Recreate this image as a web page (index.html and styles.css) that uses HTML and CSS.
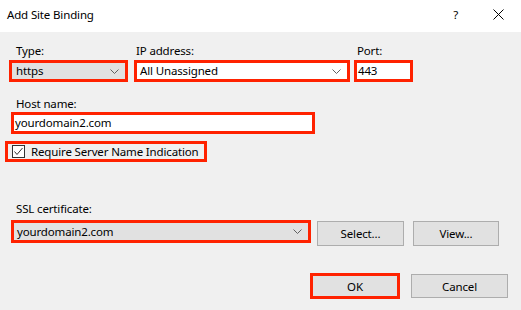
FILE: index.html
```html
<!DOCTYPE html>
<html lang="en">
<head>
    <meta charset="UTF-8">
    <title>Add Site Binding</title>
    <link rel="stylesheet" href="styles.css">
</head>
<body>
    <div class="dialog">
        <div class="titlebar">
            <span class="title">Add Site Binding</span>
            <span class="help">?</span>
            <svg class="close" width="11" height="11" viewBox="0 0 11 11">
                <path d="M0.5 0.5 L10.5 10.5 M10.5 0.5 L0.5 10.5" stroke="#000" stroke-width="1" fill="none"/>
            </svg>
        </div>

        <div class="content">
            <div class="row top-row">
                <div class="field type-field">
                    <label class="field-label">Type:</label>
                    <div class="box combo type-box">
                        <span>https</span>
                        <svg class="chevron" width="9" height="5" viewBox="0 0 9 5"><path d="M0.5 0.5 L4.5 4.5 L8.5 0.5" stroke="#606060" fill="none"/></svg>
                    </div>
                </div>
                <div class="field ip-field">
                    <label class="field-label">IP address:</label>
                    <div class="box ip-box">
                        <span>All Unassigned</span>
                        <svg class="chevron" width="9" height="5" viewBox="0 0 9 5"><path d="M0.5 0.5 L4.5 4.5 L8.5 0.5" stroke="#606060" fill="none"/></svg>
                    </div>
                </div>
                <div class="field port-field">
                    <label class="field-label">Port:</label>
                    <div class="box port-box"><span>443</span></div>
                </div>
            </div>

            <label class="field-label host-label">Host name:</label>
            <div class="box host-box"><span>yourdomain2.com</span></div>

            <div class="box check-box">
                <span class="tick">
                    <svg width="13" height="13" viewBox="0 0 13 13">
                        <rect x="0.5" y="0.5" width="12" height="12" fill="#fff" stroke="#333"/>
                        <path d="M2.5 6.5 L5 9.5 L10.5 3" stroke="#333" stroke-width="1" fill="none"/>
                    </svg>
                </span>
                <span>Require Server Name Indication</span>
            </div>

            <label class="field-label ssl-label">SSL certificate:</label>
            <div class="row ssl-row">
                <div class="box combo ssl-box">
                    <span>yourdomain2.com</span>
                    <svg class="chevron" width="9" height="5" viewBox="0 0 9 5"><path d="M0.5 0.5 L4.5 4.5 L8.5 0.5" stroke="#606060" fill="none"/></svg>
                </div>
                <button class="btn select-btn">Select...</button>
                <button class="btn view-btn">View...</button>
            </div>

            <div class="row footer">
                <button class="btn ok-btn">OK</button>
                <button class="btn cancel-btn">Cancel</button>
            </div>
        </div>
    </div>
</body>
</html>
```

FILE: styles.css
```css
body {
    margin: 0;
    font-family: 'Noto Sans', sans-serif;
    font-size: 11.5px;
    letter-spacing: -0.15px;
    color: #000;
    background: #f0f0f0;
    white-space: nowrap;
}

.dialog {
    width: 521px;
    height: 310px;
    background: #f0f0f0;
    overflow: hidden;
}

.titlebar {
    height: 32px;
    background: #fff;
    display: flex;
    align-items: center;
    padding-left: 7px;
    box-sizing: border-box;
}

.title {
    flex: 1;
    margin-top: -4px;
}

.help {
    margin-right: 35px;
    margin-top: -4px;
}

.close {
    margin-right: 17px;
    margin-top: -3px;
}

.content {
    display: flex;
    flex-direction: column;
    align-items: flex-start;
}

.row {
    display: flex;
}

.field {
    display: flex;
    flex-direction: column;
}

.field-label {
    line-height: 16px;
    height: 16px;
}

.top-row {
    margin-top: 11px;
}

.top-row .field-label {
    margin-bottom: 1px;
}

.box {
    box-sizing: border-box;
    border: 3px solid #ff2200;
    background: #fff;
    display: flex;
    align-items: center;
    line-height: 16px;
}

.combo {
    background: #e1e1e1;
}

.chevron {
    margin-left: auto;
}

.type-field {
    margin-left: 9px;
}

.type-field .field-label {
    padding-left: 7px;
}

.type-box {
    width: 119px;
    height: 22px;
    padding: 0 6px 0 4px;
}

.ip-field {
    margin-left: 6px;
}

.ip-field .field-label {
    padding-left: 2px;
}

.ip-box {
    width: 216px;
    height: 22px;
    padding: 0 6px 0 3px;
}

.port-field {
    margin-left: 4px;
}

.port-field .field-label {
    padding-left: 3px;
}

.port-box {
    width: 59px;
    height: 22px;
    padding-left: 1px;
}

.host-label {
    margin: 14px 0 0 16px;
}

.host-box {
    width: 304px;
    height: 22px;
    margin-left: 11px;
    padding-left: 1px;
}

.check-box {
    width: 202px;
    height: 21px;
    margin: 7px 0 0 5px;
    padding-left: 4px;
    background: transparent;
}

.tick {
    display: flex;
    margin-right: 6px;
}

.ssl-label {
    margin: 39px 0 3px 16px;
}

.ssl-row {
    align-items: flex-start;
}

.ssl-box {
    width: 300px;
    height: 23px;
    margin-left: 11px;
    padding: 0 6px 0 3px;
}

.btn {
    box-sizing: border-box;
    font-family: 'Noto Sans', sans-serif;
    font-size: 11.5px;
    letter-spacing: -0.15px;
    color: #000;
    background: #e1e1e1;
    border: 1px solid #adadad;
    padding: 0;
    height: 25px;
}

.select-btn {
    width: 87px;
    margin: 1px 0 0 6px;
}

.view-btn {
    width: 86px;
    margin: 1px 0 0 9px;
}

.footer {
    margin: 27px 0 0 310px;
}

.ok-btn {
    width: 90px;
    height: 26px;
    border: 3px solid #ff2200;
}

.cancel-btn {
    width: 97px;
    height: 24px;
    margin: 1px 0 0 11px;
}
```
